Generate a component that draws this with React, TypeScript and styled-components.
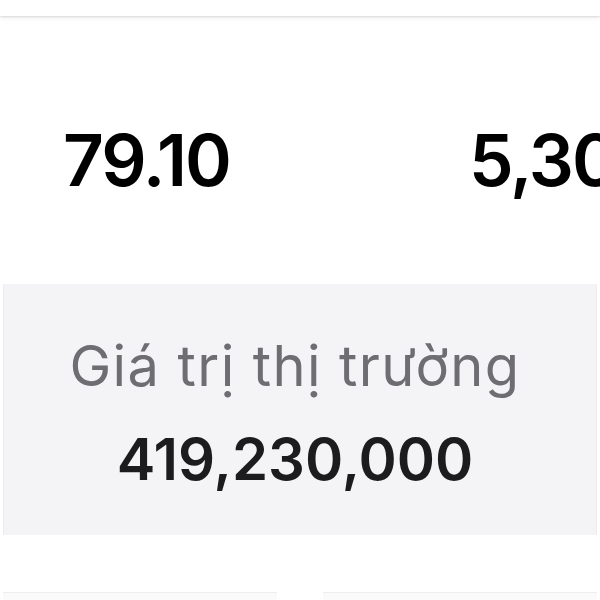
import * as React from 'react';
import styled, { createGlobalStyle } from 'styled-components';

const GlobalStyle = createGlobalStyle`
  html, body {
    margin: 0;
    padding: 0;
    background: #ffffff;
    overflow: hidden;
  }
  body {
    font-family: Inter, "Noto Sans", "Liberation Sans", sans-serif;
    -webkit-font-smoothing: antialiased;
  }
`;

const Screen = styled.div`
  width: 600px;
  height: 600px;
  display: flex;
  flex-direction: column;
  overflow: hidden;
  background: #ffffff;
`;

const TopCard = styled.div`
  height: 16px;
  flex-shrink: 0;
  background: #ffffff;
  box-shadow: 0 1px 2px rgba(0, 0, 0, 0.14), 0 4px 6px rgba(0, 0, 0, 0.03);
  position: relative;
  z-index: 1;
`;

/* the second stat runs past the right edge of the screen, as in the shot */
const StatsRow = styled.div`
  height: 268px;
  flex-shrink: 0;
  display: grid;
  grid-template-columns: 406px 1fr;
  align-items: center;
  padding-left: 63px;
  white-space: nowrap;
  overflow: hidden;
`;

const StatValue = styled.div`
  font-size: 71px;
  font-weight: 600;
  letter-spacing: -2px;
  color: #000000;
  line-height: 1;
  padding-top: 20px;
`;

const MarketPanel = styled.section`
  height: 251px;
  flex-shrink: 0;
  margin: 0 3px;
  background: #f4f4f7;
  border-left: 1px solid #ececef;
  border-right: 1px solid #ececef;
  display: flex;
  flex-direction: column;
  align-items: center;
  padding-top: 54px;
  padding-right: 10px;
  box-sizing: border-box;
`;

const MarketLabel = styled.div`
  font-size: 56px;
  font-weight: 400;
  letter-spacing: 1.4px;
  color: #6d6d72;
  line-height: 1;
`;

const MarketValue = styled.div`
  margin-top: 36px;
  font-size: 58px;
  font-weight: 600;
  color: #1c1c1e;
  line-height: 1;
`;

const BottomRow = styled.div`
  margin-top: 57px;
  display: flex;
  gap: 46px;
  padding: 0 3px;
`;

const BottomCard = styled.div`
  flex: 1;
  height: 20px;
  background: #fafafb;
  border-top: 1px solid #eeeef0;
`;

export default function App() {
  return (
    <Screen>
      <GlobalStyle />
      <TopCard />
      <StatsRow>
        <StatValue>79.10</StatValue>
        <StatValue>5,300</StatValue>
      </StatsRow>
      <MarketPanel>
        <MarketLabel>Giá trị thị trường</MarketLabel>
        <MarketValue>419,230,000</MarketValue>
      </MarketPanel>
      <BottomRow>
        <BottomCard />
        <BottomCard />
      </BottomRow>
    </Screen>
  );
}
